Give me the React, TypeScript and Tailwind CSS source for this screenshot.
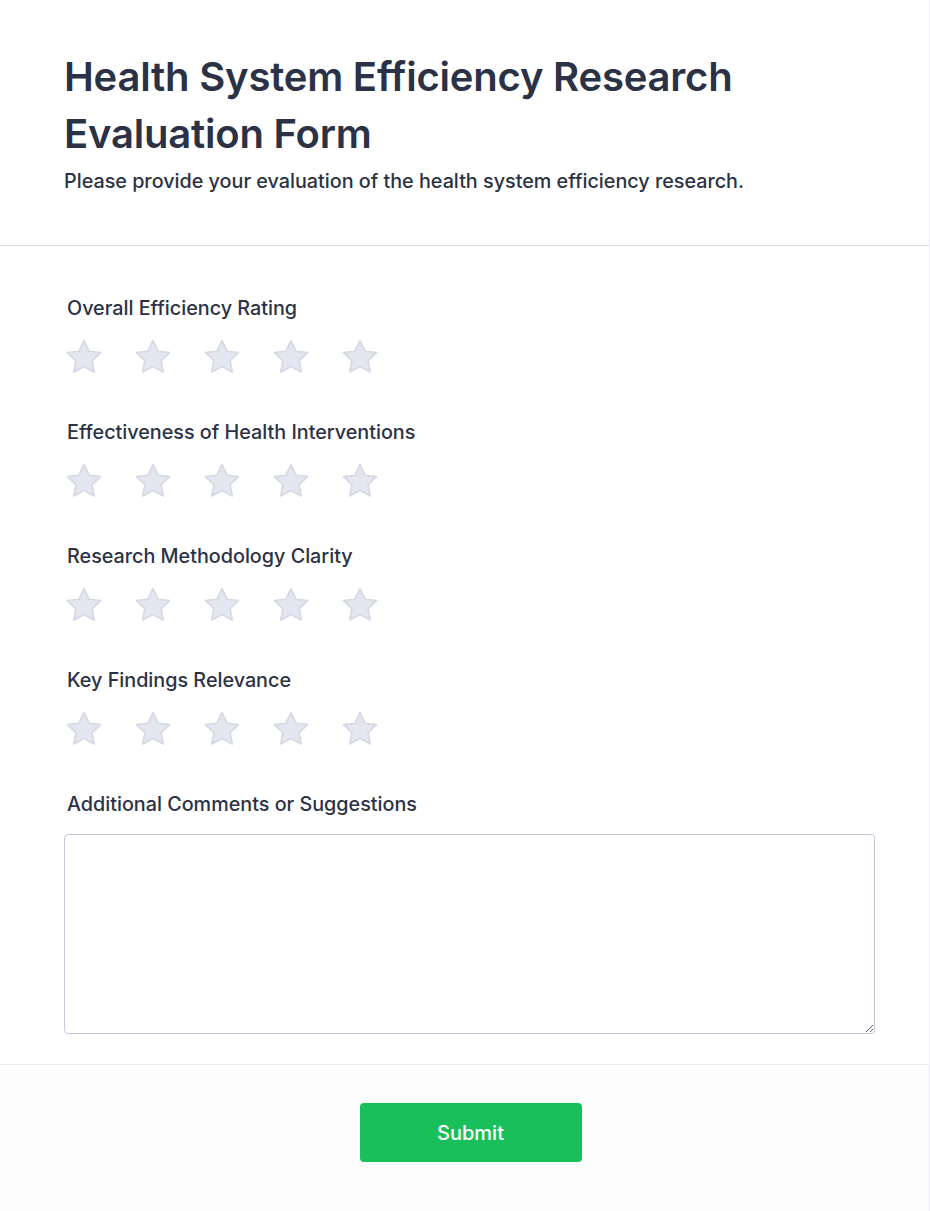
import { useState } from "react";

const questions = [
  "Overall Efficiency Rating",
  "Effectiveness of Health Interventions",
  "Research Methodology Clarity",
  "Key Findings Relevance",
];

function Star({ filled }: { filled: boolean }) {
  return (
    <svg width="40" height="38" viewBox="0 0 24 23" className="block">
      <path
        d="M12 1.6l3.05 6.4 6.95.85-5.1 4.8 1.3 6.9L12 17.2l-6.2 3.35 1.3-6.9-5.1-4.8 6.95-.85z"
        fill={filled ? "#fbbf24" : "#e4e7f0"}
        stroke={filled ? "#f59e0b" : "#d5d9e5"}
        strokeWidth="1"
        strokeLinejoin="round"
      />
    </svg>
  );
}

function StarRating() {
  const [value, setValue] = useState(0);
  return (
    <div className="flex items-center gap-[29px]">
      {[1, 2, 3, 4, 5].map((n) => (
        <button key={n} type="button" onClick={() => setValue(n)} className="cursor-pointer">
          <Star filled={n <= value} />
        </button>
      ))}
    </div>
  );
}

export default function App() {
  return (
    <div
      className="flex min-h-[1211px] w-[930px] flex-col bg-white text-[#2b3245] border-r border-[#ececf2]"
      style={{ fontFamily: "Inter, 'Noto Sans', sans-serif" }}
    >
      {/* Header */}
      <div className="px-16 pt-[48px] pb-[50px] border-b border-[#dedee8]">
        <h1 className="text-[40px] leading-[57px] font-semibold tracking-[-0.2px] max-w-[740px]">
          Health System Efficiency Research Evaluation Form
        </h1>
        <p className="mt-[5px] text-[19.75px] leading-[28px] font-medium">
          Please provide your evaluation of the health system efficiency research.
        </p>
      </div>

      {/* Questions */}
      <div className="pl-16 pr-[54px] pt-[48px] pb-[30px] border-b border-[#ececf2]">
        {questions.map((q) => (
          <div key={q} className="mb-[42px]">
            <div className="pl-[3px] text-[19.75px] leading-[28px] font-medium mb-[16px]">{q}</div>
            <StarRating />
          </div>
        ))}
        <div>
          <div className="pl-[3px] text-[19.75px] leading-[28px] font-medium mb-[16px]">
            Additional Comments or Suggestions
          </div>
          <textarea className="block w-full h-[200px] rounded-[4px] border border-[#c6c8d9] bg-white p-3 text-[16px] outline-none" />
        </div>
      </div>

      {/* Footer */}
      <div className="flex flex-1 justify-center pl-3 pt-[38px] bg-[#fdfdfd]">
        <button
          type="button"
          className="w-[222px] h-[59px] rounded-[4px] bg-[#19bf5b] text-white text-[20px] font-medium"
        >
          Submit
        </button>
      </div>
    </div>
  );
}
